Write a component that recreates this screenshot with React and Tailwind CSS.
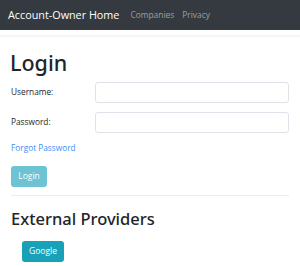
export default function App() {
  return (
    <div className="w-[300px] h-[266px] bg-white overflow-hidden" style={{ fontFamily: '"Open Sans", "Noto Sans", sans-serif' }}>
      <nav className="h-[30px] bg-[#343a40] flex items-center pl-2">
        <span className="text-[10.8px] text-white mr-[11px] leading-none">Account-Owner Home</span>
        <a className="text-[8.4px] text-white/50 mr-[8px] leading-none">Companies</a>
        <a className="text-[8.4px] text-white/50 leading-none">Privacy</a>
      </nav>
      <div className="mt-[5px] border-t-2 border-[#f5f5f5] pl-[10px] pr-[11px]">
        <h1 className="text-[21.5px] font-medium text-[#212529] leading-[26px] mt-[13px]" style={{ fontFamily: '"Noto Sans", sans-serif' }}>Login</h1>
        <div className="grid grid-cols-[85px_minmax(0,1fr)] items-center gap-y-[9px] mt-[6px]">
          <label className="text-[8.3px] text-[#212529] pl-[1px]">Username:</label>
          <input className="w-full h-[21px] border border-[#dfe2e8] rounded-[3px] bg-white" />
          <label className="text-[8.3px] text-[#212529] pl-[1px]">Password:</label>
          <input type="password" className="w-full h-[21px] border border-[#dfe2e8] rounded-[3px] bg-white" />
        </div>
        <a className="block text-[8.3px] text-[#3d8ef8] mt-[8px] pl-[1px] leading-[14px]">Forgot Password</a>
        <div className="mt-[6px] pl-[1px]">
          <button className="h-[21px] w-[36px] rounded-[3px] bg-[#6dc3d3] text-white text-[8.5px] leading-none">Login</button>
        </div>
        <div className="ml-[1px] mt-[8px] border-t border-[#ececec]"></div>
        <h3 className="text-[16.5px] font-medium text-[#212529] leading-[22px] mt-[12px] pl-[1px]" style={{ fontFamily: '"Noto Sans", sans-serif' }}>External Providers</h3>
        <div className="mt-[6px] pl-[12px]">
          <button className="h-[21px] w-[42px] rounded-[3px] bg-[#17a2b8] text-white text-[8.5px] leading-none">Google</button>
        </div>
      </div>
    </div>
  );
}
